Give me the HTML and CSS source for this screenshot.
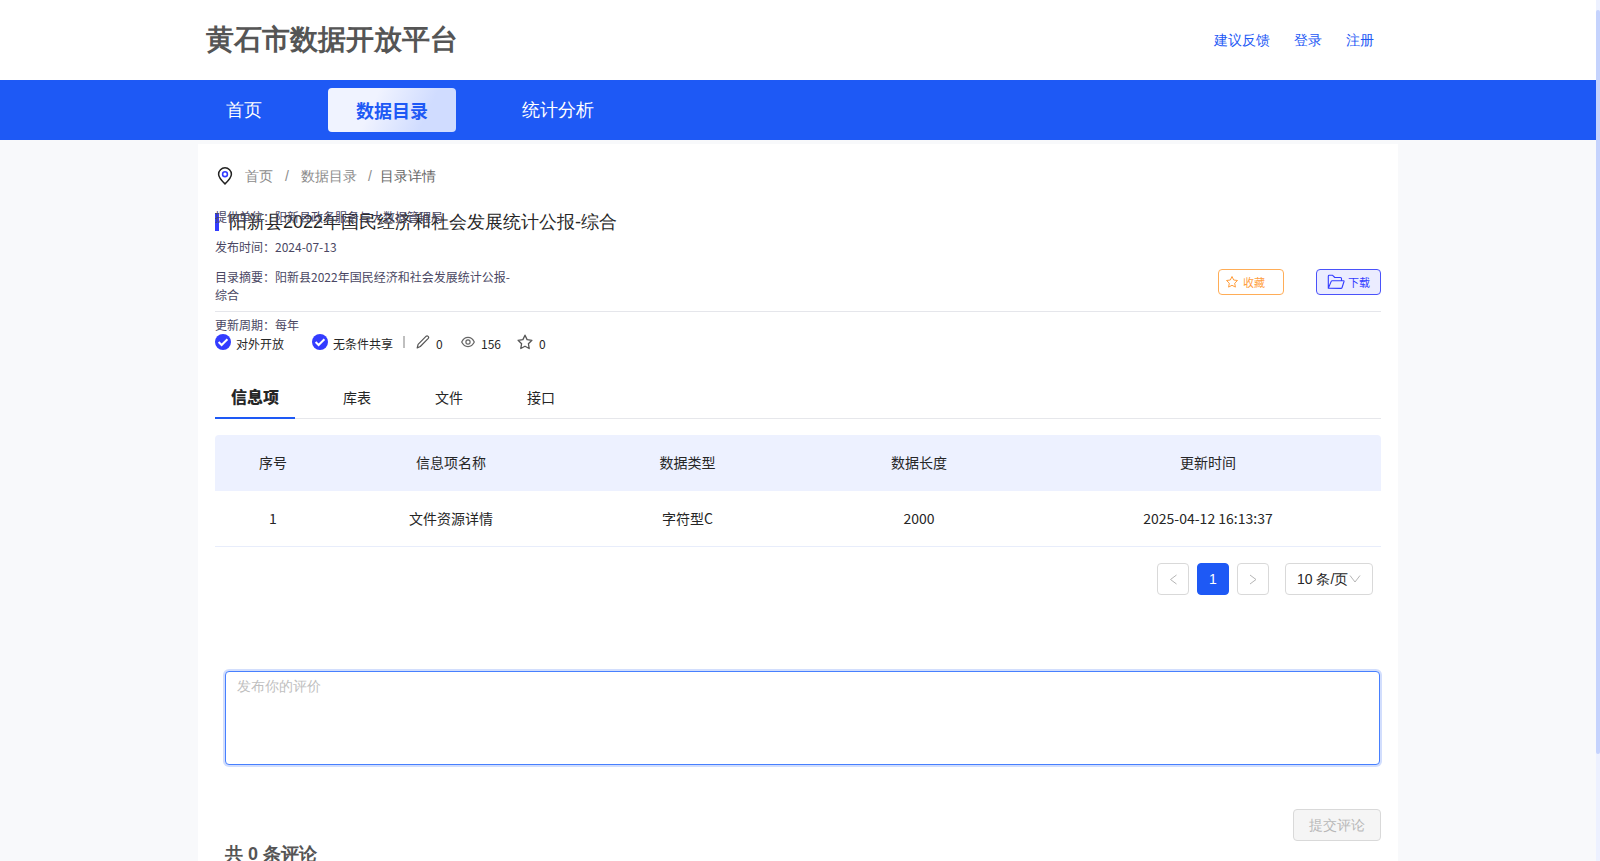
FILE: index.html
```html
<!DOCTYPE html>
<html lang="en">
<head>
  <meta charset="UTF-8" />
  <title>黄石市数据开放平台</title>
  <link rel="stylesheet" href="styles.css">
</head>
<body>
  <div class="scrollbar"><div class="scrollbar-thumb"></div></div>

  <div class="page">
    <header class="header">
      <div class="header-inner">
        <h1 class="site-name">黄石市数据开放平台</h1>
        <div class="user-links">
          <a>建议反馈</a>
          <a>登录</a>
          <a>注册</a>
        </div>
      </div>
    </header>

    <nav class="nav">
      <div class="nav-inner">
        <a class="nav-item">首页</a>
        <a class="nav-item active">数据目录</a>
        <a class="nav-item">统计分析</a>
      </div>
    </nav>

    <main class="container">
      <div class="breadcrumb">
        <svg class="pin" width="20" height="20" viewBox="0 0 20 20" fill="none">
          <path d="M10 17.9C6 14 3.6 11 3.6 8.2a6.4 6.4 0 0 1 12.8 0C16.4 11 14 14 10 17.9z" stroke="#222" stroke-width="1.5" />
          <circle cx="10" cy="8.2" r="2.4" stroke="#333cff" stroke-width="1.6" />
        </svg>
        <a>首页</a><i class="sep">/</i><a>数据目录</a><i class="sep last">/</i><span>目录详情</span>
      </div>

      <section class="detail">
        <h2 class="detail-title">阳新县2022年国民经济和社会发展统计公报-综合</h2>
        <ul class="detail-info">
          <li>提供单位：阳新县政务服务与大数据管理局</li>
          <li>发布时间：2024-07-13</li>
          <li>目录摘要：阳新县2022年国民经济和社会发展统计公报-综合</li>
          <li>更新周期：每年</li>
        </ul>
        <div class="actions">
          <button class="action collect">
            <svg width="14" height="14" viewBox="0 0 14 14" fill="none" stroke="#ff9e3d">
              <path d="M7 1.5l1.700 3.500 3.800.5-2.800 2.700.7 3.900L7 10.300l-3.400 1.800.7-3.900L1.500 5.500 5.300 5z" stroke-linejoin="round" />
            </svg>
            <span>收藏</span>
          </button>
          <button class="action download">
            <svg width="18" height="16" viewBox="0 0 18 16" fill="none" stroke="#333cff" stroke-width="1.100" stroke-linejoin="round">
              <path d="M1.300 14V2.200q0-.9.900-.9h3.400l2.200 2.200h5.700q1 0 1 1v2.200M1.300 14.300L4.200 7.400q.3-.7 1-.7h11.200q.8 0 .6.800l-1.900 6q-.3.900-1.100.9z" />
            </svg>
            <span>下载</span>
          </button>
        </div>
      </section>

      <div class="status">
        <svg class="check" width="16" height="16" viewBox="0 0 16 16">
          <circle cx="8" cy="8" r="8" fill="#333cff" />
          <path d="M3.600 8l3 3L12.400 5.200" fill="none" stroke="#fff" stroke-width="2" />
        </svg>
        <span class="share">对外开放</span>
        <svg class="check" width="16" height="16" viewBox="0 0 16 16">
          <circle cx="8" cy="8" r="8" fill="#333cff" />
          <path d="M3.600 8l3 3L12.400 5.200" fill="none" stroke="#fff" stroke-width="2" />
        </svg>
        <span class="cond">无条件共享</span>
        <i class="bar"></i>
        <svg class="ico" width="14" height="14" viewBox="0 0 14 14" fill="none" stroke="#555" stroke-width="1.200" stroke-linejoin="round">
          <path d="M1.200 12.900l.9-3.600 8.100-8.100q.9-.8 1.900.2t.2 1.900L4.300 11.500z" />
        </svg>
        <span class="edits">0</span>
        <svg class="ico" width="14" height="14" viewBox="0 0 14 14" fill="none" stroke="#666" stroke-width="1.200">
          <path d="M.7 7C3.600.9 10.400.9 13.300 7 10.400 13.100 3.600 13.100.7 7z" />
          <circle cx="7" cy="7" r="2.100" />
        </svg>
        <span class="views">156</span>
        <svg class="ico" width="16" height="16" viewBox="0 0 16 16" fill="none" stroke="#555" stroke-width="1.300" stroke-linejoin="round">
          <path d="M8 1.200l2.100 4.400 4.800.7-3.500 3.400.8 4.800L8 12.200l-4.200 2.300.8-4.800L1.100 6.300l4.800-.7z" />
        </svg>
        <span>0</span>
      </div>

      <div class="tabs">
        <a class="tab active">信息项</a>
        <a class="tab">库表</a>
        <a class="tab">文件</a>
        <a class="tab">接口</a>
      </div>

      <table class="table">
        <colgroup>
          <col class="col-no"><col class="col-name"><col class="col-type"><col class="col-len"><col class="col-time">
        </colgroup>
        <thead>
          <tr><th>序号</th><th>信息项名称</th><th>数据类型</th><th>数据长度</th><th>更新时间</th></tr>
        </thead>
        <tbody>
          <tr><td>1</td><td>文件资源详情</td><td>字符型C</td><td>2000</td><td>2025-04-12 16:13:37</td></tr>
        </tbody>
      </table>

      <div class="pagination">
        <button class="page-btn">
          <svg width="12" height="12" viewBox="0 0 12 12" fill="none" stroke="#b5b5b5"><path d="M9.500 2L3.500 6.500l6 4.500" /></svg>
        </button>
        <button class="page-btn current">1</button>
        <button class="page-btn">
          <svg width="12" height="12" viewBox="0 0 12 12" fill="none" stroke="#b5b5b5"><path d="M3 2l6 4.500L3 11" /></svg>
        </button>
        <div class="page-size">
          <span>10 条/页</span>
          <svg width="12" height="12" viewBox="0 0 12 12" fill="none" stroke="#b5b5b5"><path d="M1 2.500l5 6.500 5-6.500" /></svg>
        </div>
      </div>

      <div class="comment">
        <textarea class="comment-input" placeholder="发布你的评价"></textarea>
        <button class="submit">提交评论</button>
        <h3 class="comment-total">共 0 条评论</h3>
      </div>
    </main>
  </div>
</body>
</html>
```
FILE: styles.css
```css
* {
  box-sizing: border-box;
}

body {
  margin: 0;
  height: 861px;
  overflow: hidden;
  background-color: #f8f9fb;
  font-family: "Liberation Sans", sans-serif;
  font-size: 14px;
  line-height: 22px;
  color: #262626;
}

h1, h2, h3, ul {
  margin: 0;
  padding: 0;
}

i {
  font-style: normal;
}

svg {
  display: block;
  flex: none;
}

button {
  font-family: inherit;
  padding: 0;
}

.page {
  width: 1596px;
}

.scrollbar {
  position: absolute;
  top: 0;
  right: 0;
  width: 4px;
  height: 861px;
  padding-top: 10px;
  background-color: #edf1ff;
}

.scrollbar-thumb {
  height: 744px;
  border-radius: 2px;
  background-color: #c5d3fd;
}

/* header */
.header {
  height: 80px;
  background-color: #fff;
}

.header-inner {
  display: flex;
  justify-content: space-between;
  align-items: center;
  width: 1200px;
  height: 80px;
  margin: 0 auto;
  padding: 0 24px 0 8px;
}

.site-name {
  font-size: 28px;
  line-height: 40px;
  font-weight: bold;
  color: #555;
}

.user-links {
  display: flex;
  gap: 24px;
  color: #1e59f5;
}

.nav {
  height: 60px;
  background-color: #1e59f5;
}

.nav-inner {
  display: flex;
  align-items: center;
  gap: 38px;
  width: 1200px;
  height: 60px;
  margin: 0 auto;
}

.nav-item {
  height: 44px;
  padding: 0 28px;
  font-size: 18px;
  line-height: 44px;
  color: #fff;
  border-radius: 4px;
}

.nav-item.active {
  font-family: "Noto Sans CJK SC", sans-serif;
  font-weight: bold;
  color: #1e59f5;
  background: linear-gradient(115deg, #f0f3ff 35%, #d0dcff 75%);
}

/* content */
.container {
  width: 1200px;
  height: 760px;
  margin: 4px auto 0;
  padding: 21px 17px 0;
  background-color: #fff;
}

.breadcrumb {
  display: flex;
  align-items: center;
  height: 22px;
  color: #8c8c8c;
}

.breadcrumb .pin {
  margin-right: 10px;
}

.breadcrumb .sep {
  width: 28px;
  text-align: center;
}

.breadcrumb .sep.last {
  width: 23px;
  padding-left: 3px;
}

.breadcrumb span {
  color: #666;
}

.detail {
  position: relative;
  height: 125px;
  padding-top: 22px;
  border-bottom: 1px solid #e5e6eb;
}

.detail-title {
  padding-left: 14px;
  font-size: 18px;
  line-height: 27px;
  font-weight: normal;
  background: linear-gradient(#333cff, #333cff) 0 4px / 4px 18px no-repeat;
}

/* the info list runs over the title and the divider */
.detail-info {
  position: absolute;
  top: 15px;
  left: 0;
  width: 300px;
  list-style: none;
  font-family: "Noto Sans CJK SC", sans-serif;
  font-size: 12px;
  line-height: 18px;
  color: #4a4763;
}

.detail-info li {
  padding: 6px 0;
}

.actions {
  display: flex;
  justify-content: flex-end;
  gap: 32px;
  margin-top: 33px;
}

.action {
  display: flex;
  align-items: center;
  height: 26px;
  border-radius: 4px;
  font-family: "Noto Sans CJK SC", sans-serif;
  font-size: 11px;
}

.collect {
  width: 66px;
  padding-left: 6px;
  gap: 4px;
  color: #ff9e3d;
  background-color: #fff;
  border: 1px solid #ffad57;
}

.download {
  width: 65px;
  padding-left: 10px;
  gap: 3px;
  color: #333cff;
  background-color: #ebecff;
  border: 1px solid #4a52fa;
}

.status {
  display: flex;
  align-items: center;
  height: 16px;
  margin-top: 22px;
  font-family: "Noto Sans CJK SC", sans-serif;
  font-size: 12px;
}

.status span {
  position: relative;
  top: 2px;
}

.check {
  margin-right: 5px;
}

.share {
  width: 76px;
}

.cond {
  width: 70px;
}

.bar {
  width: 2px;
  height: 12px;
  margin-right: 11px;
  background-color: #bfbfbf;
}

.ico {
  margin-right: 6px;
}

.edits {
  width: 25px;
}

.views {
  width: 36px;
}

.tabs {
  display: flex;
  height: 43px;
  margin-top: 26px;
  border-bottom: 1px solid #e6e7eb;
  font-family: "Noto Sans CJK SC", sans-serif;
  line-height: 42px;
}

.tab {
  height: 43px;
  margin-left: 16px;
  padding: 0 32px;
}

.tab + .tab + .tab {
  margin-left: 0;
}

.tab.active {
  width: 80px;
  margin-left: 0;
  padding: 0;
  text-align: center;
  font-size: 16px;
  font-weight: 900;
  line-height: 41px;
  border-bottom: 2px solid #1e59f5;
}

.table {
  width: 1166px;
  margin-top: 16px;
  table-layout: fixed;
  border-collapse: separate;
  border-spacing: 0;
  font-family: "Noto Sans CJK SC", sans-serif;
  text-align: center;
}

.table th {
  height: 56px;
  padding: 0 0 2px 1px;
  font-weight: normal;
  background-color: #edf1ff;
}

.table th:first-child {
  border-top-left-radius: 4px;
}

.table th:last-child {
  border-top-right-radius: 4px;
}

.table td {
  height: 56px;
  padding: 0 0 2px 1px;
  border-bottom: 1px solid #e8edfb;
}

.col-no { width: 115px; }
.col-name { width: 241px; }
.col-type { width: 232px; }
.col-len { width: 231px; }
.col-time { width: 347px; }

.pagination {
  display: flex;
  justify-content: flex-end;
  gap: 8px;
  margin: 16px 8px 0 0;
}

.page-btn {
  display: flex;
  align-items: center;
  justify-content: center;
  width: 32px;
  height: 32px;
  font-size: 14px;
  background-color: #fff;
  border: 1px solid #d9d9d9;
  border-radius: 4px;
}

.page-btn.current {
  color: #fff;
  background-color: #1e59f5;
  border-color: #1e59f5;
}

.page-size {
  display: flex;
  align-items: center;
  width: 88px;
  height: 32px;
  margin-left: 8px;
  padding-left: 11px;
  gap: 1px;
  border: 1px solid #d9d9d9;
  border-radius: 4px;
  white-space: nowrap;
}

.comment {
  display: flex;
  flex-direction: column;
  margin-top: 76px;
  padding-left: 10px;
}

.comment-input {
  display: block;
  width: 1155px;
  height: 94px;
  padding: 3px 11px;
  font-family: inherit;
  font-size: 14px;
  line-height: 22px;
  border: 1px solid #4780ff;
  border-radius: 4px;
  box-shadow: 0 0 0 2px rgba(30, 89, 245, 0.2);
  outline: none;
  resize: none;
}

.comment-input::placeholder {
  color: #bfbfbf;
}

.submit {
  align-self: flex-end;
  width: 88px;
  height: 32px;
  margin-top: 44px;
  padding-top: 1px;
  font-size: 14px;
  color: #b8b8b8;
  background-color: #f5f5f5;
  border: 1px solid #d9d9d9;
  border-radius: 4px;
}

.comment-total {
  font-size: 18px;
  line-height: 27px;
  color: #555;
}
```
